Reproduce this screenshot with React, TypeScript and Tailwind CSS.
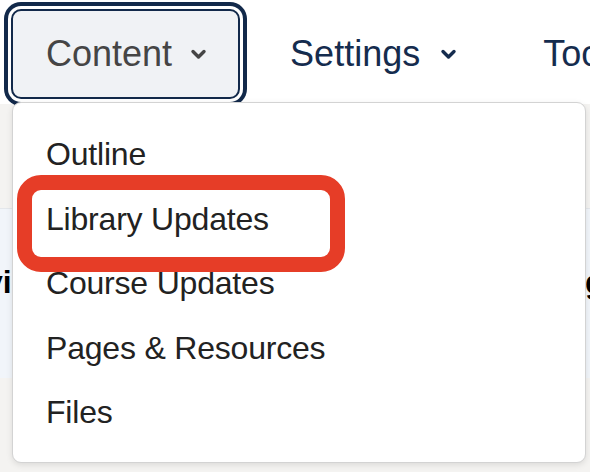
import React from "react";

/* =========================
   CHEVRON
========================= */
function Chevron({ color }: { color: string }) {
  return (
    <svg width="19" height="13" viewBox="0 0 19 13" fill="none">
      <polyline
        points="4,3.5 9.5,9 15,3.5"
        stroke={color}
        strokeWidth="3.4"
        strokeLinecap="round"
        strokeLinejoin="round"
      />
    </svg>
  );
}

const items = [
  "Outline",
  "Library Updates",
  "Course Updates",
  "Pages & Resources",
  "Files",
];

export default function App() {
  return (
    <div
      className="relative w-[590px] h-[472px] overflow-hidden bg-[#f4f3f1]"
      style={{ fontFamily: '"Liberation Sans", Arial, sans-serif' }}
    >
      {/* NAV */}
      <nav className="h-[104px] bg-white flex items-start gap-[15px] pl-[11px] pt-[9px]">
        <button className="h-[90px] pl-[33px] pr-[30px] flex items-center gap-[17px] rounded-[10px] border-2 border-[#12294a] bg-[#f0f2f5] shadow-[0_0_0_3px_#ffffff,0_0_0_7px_#12294a] text-[36px] text-[#454545] shrink-0">
          <span>Content</span>
          <Chevron color="#454545" />
        </button>
        <button className="h-[90px] px-[33px] flex items-center gap-[19px] rounded-[10px] border-2 border-transparent text-[36px] text-[#152c4e] shrink-0">
          <span>Settings</span>
          <Chevron color="#152c4e" />
        </button>
        <button className="h-[90px] px-[33px] flex items-center rounded-[10px] border-2 border-transparent text-[36px] text-[#152c4e] shrink-0">
          <span>Tools</span>
        </button>
      </nav>

      {/* PAGE BEHIND */}
      <div className="h-[104px]" />
      <div className="h-[170px] bg-[#f1f5fa] border-t border-[#e4e7eb] pt-[53px] overflow-hidden">
        <div className="flex justify-between whitespace-nowrap text-[32px] leading-[40px] font-bold text-black">
          <span className="-ml-[56px] shrink-0">Revi</span>
          <span className="-mr-[34px] shrink-0">go</span>
        </div>
      </div>

      {/* DROPDOWN */}
      <div className="absolute left-[12px] top-[102px] w-[574px] h-[361px] rounded-[9px] border border-[#d3d3d3] bg-white shadow-[0_2px_6px_rgba(0,0,0,0.1)] pt-[19px]">
        {items.map((label) => (
          <div
            key={label}
            className="h-[64.5px] leading-[64.5px] pl-[33px] text-[32px] tracking-[-0.2px] text-[#222222] whitespace-nowrap"
          >
            {label}
          </div>
        ))}
      </div>

      {/* ANNOTATION */}
      <div className="absolute left-[17px] top-[175px] w-[328px] h-[97px] border-[15px] border-[#e63d27] rounded-[24px]" />
    </div>
  );
}
